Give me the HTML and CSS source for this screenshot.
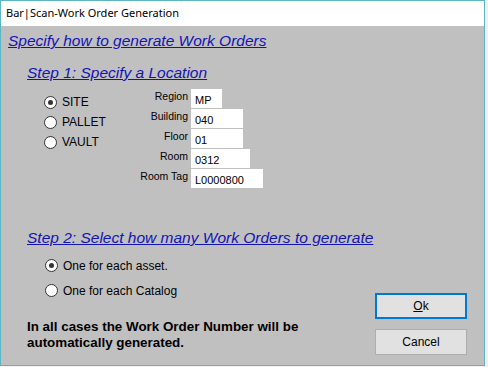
FILE: index.html
```html
<!DOCTYPE html>
<html lang="en">
<head>
  <meta charset="UTF-8">
  <title>Bar|Scan-Work Order Generation</title>
  <link rel="stylesheet" href="styles.css">
</head>
<body>
  <div class="window">
    <div class="titlebar">Bar|Scan-Work Order Generation</div>

    <div class="content">
      <h1 class="heading">Specify how to generate Work Orders</h1>

      <h2 class="step">Step 1: Specify a Location</h2>
      <div class="location">
        <div class="radios">
          <label class="radio"><span class="dot checked"></span>SITE</label>
          <label class="radio"><span class="dot"></span>PALLET</label>
          <label class="radio"><span class="dot"></span>VAULT</label>
        </div>
        <div class="fields">
          <span class="field-label">Region</span>
          <input class="field w-region" type="text" value="MP">
          <span class="field-label">Building</span>
          <input class="field w-building" type="text" value="040">
          <span class="field-label">Floor</span>
          <input class="field w-building" type="text" value="01">
          <span class="field-label">Room</span>
          <input class="field w-room" type="text" value="0312">
          <span class="field-label">Room Tag</span>
          <input class="field w-tag" type="text" value="L0000800">
        </div>
      </div>

      <h2 class="step step-two">Step 2: Select how many Work Orders to generate</h2>
      <div class="lower">
        <div class="lower-left">
          <div class="count-options">
            <label class="radio wide"><span class="dot checked"></span>One for each asset.</label>
            <label class="radio wide"><span class="dot"></span>One for each Catalog</label>
          </div>
          <p class="note">In all cases the Work Order Number will be<br>automatically generated.</p>
        </div>
        <div class="actions">
          <button class="btn btn-default"><u>O</u>k</button>
          <button class="btn">Cancel</button>
        </div>
      </div>
    </div>
  </div>
</body>
</html>
```

FILE: styles.css
```css
body {
  margin: 0;
  background: #f0f0f0;
  font-family: "Liberation Sans", Arial, sans-serif;
}
.window {
  width: 483px;
  height: 364px;
  border: 1px solid #5cb6c3;
  background: #c0c0c0;
  display: flex;
  flex-direction: column;
}
.titlebar {
  height: 25px;
  line-height: 24px;
  padding-left: 5px;
  background: #fff;
  font-family: "Noto Sans", sans-serif;
  font-size: 11px;
  color: #000;
}
.content {
  padding: 5px 0 0 7px;
  flex: 1;
  display: flex;
  flex-direction: column;
}
.heading, .step {
  margin: 0;
  font-style: italic;
  font-weight: normal;
  font-size: 15.5px;
  line-height: 19px;
  color: #1414b4;
  text-decoration: underline;
}
.step {
  margin: 13px 0 0 19px;
}
.step-two {
  margin-top: 40px;
}
.location {
  display: flex;
  margin-top: 7px;
}
.radios {
  margin-left: 36px;
  width: 68px;
  display: flex;
  flex-direction: column;
  padding-top: 3px;
}
.radio {
  display: flex;
  align-items: center;
  height: 20px;
  font-size: 12px;
  color: #000;
}
.radio.wide {
  height: 25px;
}
.dot {
  width: 11px;
  height: 11px;
  border: 1px solid #333;
  border-radius: 50%;
  background: #fff;
  margin-right: 5px;
  position: relative;
}
.dot.checked::after {
  content: "";
  position: absolute;
  left: 3px;
  top: 3px;
  width: 5px;
  height: 5px;
  border-radius: 50%;
  background: #333;
}
.fields {
  display: grid;
  grid-template-columns: 76px auto;
  column-gap: 3px;
  row-gap: 1px;
  justify-items: start;
}
.field-label {
  justify-self: end;
  font-size: 10.5px;
  line-height: 14px;
  color: #000;
}
.field {
  height: 19px;
  box-sizing: border-box;
  border: none;
  padding: 2px 0 0 4px;
  background: #fff;
  font-family: "Liberation Sans", Arial, sans-serif;
  font-size: 11px;
  color: #000;
  outline: none;
}
.w-region { width: 31px; }
.w-building { width: 52px; }
.w-room { width: 59px; }
.w-tag { width: 72px; }
.lower {
  display: flex;
  justify-content: space-between;
  flex: 1;
}
.count-options {
  margin: 6px 0 0 37px;
}
.note {
  margin: 16px 0 0 19px;
  font-weight: bold;
  font-size: 13.4px;
  line-height: 16px;
  color: #000;
}
.actions {
  align-self: flex-end;
  display: flex;
  flex-direction: column;
  gap: 10px;
  margin: 0 17px 10px 0;
}
.btn {
  width: 92px;
  height: 26px;
  border: 1px solid #adadad;
  background: #e1e1e1;
  font-family: "Liberation Sans", Arial, sans-serif;
  font-size: 12px;
  color: #000;
  padding: 0;
}
.btn-default {
  border: 2px solid #0078d7;
}
```
